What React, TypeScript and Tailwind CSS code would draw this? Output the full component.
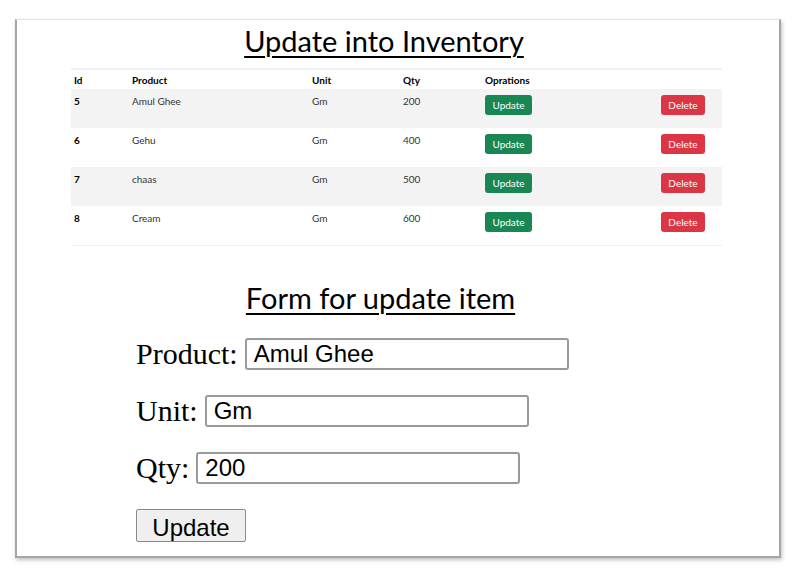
const rows = [
  { id: 5, product: 'Amul Ghee', unit: 'Gm', qty: 200 },
  { id: 6, product: 'Gehu', unit: 'Gm', qty: 400 },
  { id: 7, product: 'chaas', unit: 'Gm', qty: 500 },
  { id: 8, product: 'Cream', unit: 'Gm', qty: 600 },
];

function InventoryTable() {
  return (
    <div className="ml-[54px] mr-[57px] mt-[8px] border-t-2 border-b border-[#eef1f4] font-['Lato',sans-serif] text-[10px] leading-[12px]">
      <div className="grid grid-cols-[58px_180px_91px_82px_1fr] h-[19px] items-center font-bold text-black">
        <div className="pl-[3px]">Id</div>
        <div className="pl-[3px]">Product</div>
        <div className="pl-[3px]">Unit</div>
        <div className="pl-[3px]">Qty</div>
        <div className="pl-[3px]">Oprations</div>
      </div>

      {rows.map((r, i) => (
        <div
          key={r.id}
          className={`grid grid-cols-[58px_180px_91px_82px_1fr] h-[39px] pt-[6px] text-[#333] ${
            i % 2 === 0 ? 'bg-[#f3f3f3]' : 'bg-white'
          }`}
        >
          <div className="pl-[3px] font-bold text-black">{r.id}</div>
          <div className="pl-[3px]">{r.product}</div>
          <div className="pl-[3px]">{r.unit}</div>
          <div className="pl-[3px]">{r.qty}</div>
          <div className="pl-[3px] pr-[17px] flex justify-between items-start">
            <button className="h-[20px] w-[47px] rounded-[3px] bg-[#198754] text-white text-[10px]">
              Update
            </button>
            <button className="h-[20px] w-[44px] rounded-[3px] bg-[#dc3545] text-white text-[10px]">
              Delete
            </button>
          </div>
        </div>
      ))}
    </div>
  );
}

function Field({ label, value }: { label: string; value: string }) {
  return (
    <div className="flex items-center gap-[7px] h-[32px]">
      <label className="font-['Liberation_Serif',serif] text-[30px] leading-[32px] text-black">
        {label}
      </label>
      <input
        defaultValue={value}
        className="w-[324px] h-[32px] border-2 border-[#9a9a9a] rounded-[3px] pl-[7px] font-['Liberation_Sans',Arial,sans-serif] text-[24px] text-black outline-none"
      />
    </div>
  );
}

export default function App() {
  return (
    <div className="min-h-screen bg-white pt-[19px] pl-[15px]">
      <div className="w-[766px] h-[539px] bg-white border-t border-t-[#e4e4e4] border-x-2 border-b-2 border-x-[#a6a6a6] border-b-[#a6a6a6] shadow-[1px_2px_4px_rgba(0,0,0,0.25)]">
        <h1 className="mt-[2px] pr-[28px] text-center font-['Lato',sans-serif] text-[29px] leading-[38px] text-black underline underline-offset-[4px] decoration-[2px]">
          Update into Inventory
        </h1>

        <InventoryTable />

        <h2 className="mt-[33px] pr-[35px] text-center font-['Lato',sans-serif] text-[29px] leading-[38px] text-black underline underline-offset-[4px] decoration-[2px]">
          Form for update item
        </h2>

        <div className="pl-[119px] mt-[21px] flex flex-col gap-[25px]">
          <Field label="Product:" value="Amul Ghee" />
          <Field label="Unit:" value="Gm" />
          <Field label="Qty:" value="200" />
          <div>
            <button className="h-[33px] w-[110px] bg-[#efefef] border border-[#8a8a8a] rounded-[2px] font-['Liberation_Sans',Arial,sans-serif] text-[24px] text-black">
              Update
            </button>
          </div>
        </div>
      </div>
    </div>
  );
}
